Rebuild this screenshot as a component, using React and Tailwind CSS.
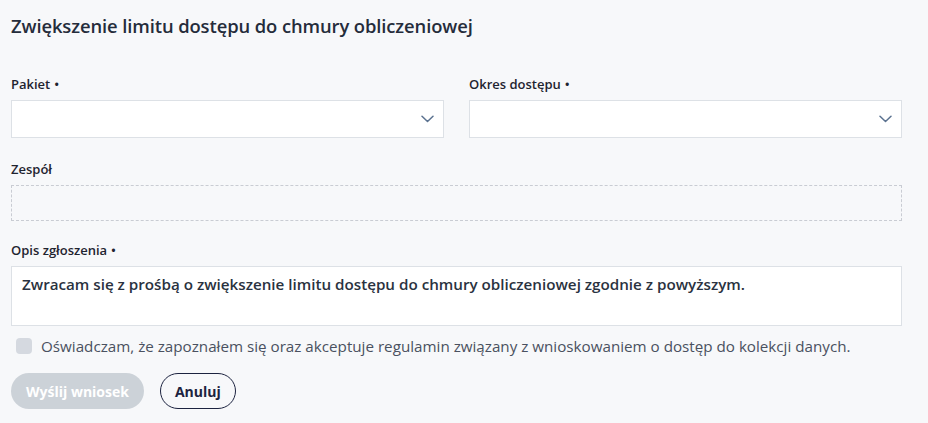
import React, { useState } from "react";

const font = { fontFamily: '"Open Sans", "Noto Sans", sans-serif' };

function Label({ children, required }) {
  return (
    <div className="text-[13px] font-semibold text-[#1f2430] leading-5 mb-[6px]">
      {children}
      {required && <span className="ml-1">•</span>}
    </div>
  );
}

function Chevron() {
  return (
    <svg width="13" height="8" viewBox="0 0 13 8" fill="none" className="text-[#5b7290]">
      <path d="M1 1.2l5.5 5.3L12 1.2" stroke="currentColor" strokeWidth="1.5" strokeLinecap="round" strokeLinejoin="round" />
    </svg>
  );
}

function SelectBox() {
  return (
    <div className="h-[38px] bg-white border border-[#dde1e6] flex items-center justify-end pr-[9px]">
      <Chevron />
    </div>
  );
}

export default function App() {
  const [agree, setAgree] = useState(false);
  const [desc] = useState(
    "Zwracam się z prośbą o zwiększenie limitu dostępu do chmury obliczeniowej zgodnie z powyższym."
  );

  return (
    <div className="w-[928px] h-[423px] bg-[#f7f8fa] pl-[11px] pr-[26px] pt-[14px]" style={font}>
      <h1 className="text-[18.4px] font-semibold text-[#252c3b] leading-6 tracking-[-0.1px]">
        Zwiększenie limitu dostępu do chmury obliczeniowej
      </h1>

      <div className="grid grid-cols-2 gap-[25px] mt-[36px]">
        <div>
          <Label required>Pakiet</Label>
          <SelectBox />
        </div>
        <div>
          <Label required>Okres dostępu</Label>
          <SelectBox />
        </div>
      </div>

      <div className="mt-[21px]">
        <Label>Zespół</Label>
        <div className="h-[36px] border border-dashed border-[#c9ccd3]" />
      </div>

      <div className="mt-[19px]">
        <Label required>Opis zgłoszenia</Label>
        <div className="h-[60px] bg-white border border-[#dde1e6] px-[10px] pt-[5px] text-[15.2px] font-semibold text-[#2a3240] leading-6">
          {desc}
        </div>
      </div>

      <label className="flex items-center gap-[9px] mt-[10px] ml-[5px] cursor-pointer">
        <span
          onClick={() => setAgree(!agree)}
          className="w-[16px] h-[16px] rounded-[4px] bg-[#d5d9e0] shrink-0"
        />
        <span className="text-[15.2px] text-[#4a5160] leading-5">
          Oświadczam, że zapoznałem się oraz akceptuje regulamin związany z wnioskowaniem o dostęp do kolekcji danych.
        </span>
      </label>

      <div className="flex gap-[16px] mt-[17px]">
        <button
          disabled={!agree}
          className="h-[36px] px-[15px] rounded-full bg-[#ccd2d8] text-white text-[14px] font-bold"
        >
          Wyślij wniosek
        </button>
        <button className="h-[36px] px-[14px] rounded-full border border-[#1c2340] text-[#1c2340] text-[14px] font-bold bg-transparent">
          Anuluj
        </button>
      </div>
    </div>
  );
}
